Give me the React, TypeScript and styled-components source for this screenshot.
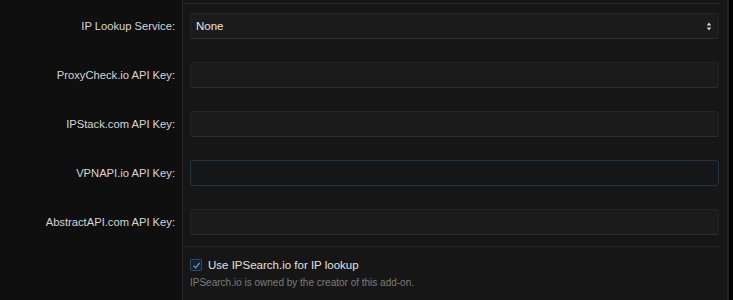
import React, { useState } from 'react'
import styled, { createGlobalStyle } from 'styled-components'

const GlobalStyle = createGlobalStyle`
  html, body {
    margin: 0;
    padding: 0;
    background: #000;
  }
  body {
    font-family: "Liberation Sans", Arial, Helvetica, sans-serif;
    -webkit-font-smoothing: antialiased;
  }
`

type Field = { label: string; value: string; focused?: boolean }

const fields: Field[] = [
  { label: 'ProxyCheck.io API Key:', value: '' },
  { label: 'IPStack.com API Key:', value: '' },
  { label: 'VPNAPI.io API Key:', value: '', focused: true },
  { label: 'AbstractAPI.com API Key:', value: '' },
]

export default function App() {
  const [useIpSearch, setUseIpSearch] = useState(true)

  return (
    <>
      <GlobalStyle />
      <Page>
        <Form>
          <Row>
            <Label>IP Lookup Service:</Label>
            <Value>
              <SelectBox>
                <span>None</span>
                <Arrows viewBox="0 0 6 10">
                  <path d="M3 0.5 L5.5 4 H0.5 Z" fill="#d8d8d8" />
                  <path d="M3 9.5 L5.5 6 H0.5 Z" fill="#d8d8d8" />
                </Arrows>
              </SelectBox>
            </Value>
          </Row>

          {fields.map((f) => (
            <Row key={f.label}>
              <Label>{f.label}</Label>
              <Value>
                <TextInput focused={f.focused} defaultValue={f.value} />
              </Value>
            </Row>
          ))}

          <Row last>
            <Label />
            <Value checks>
              <CheckLine onClick={() => setUseIpSearch(!useIpSearch)}>
                <CheckBox>
                  {useIpSearch && (
                    <svg width="9" height="9" viewBox="0 0 9 9">
                      <path d="M1.5 4.6 L3.6 6.7 L7.6 2" stroke="#4f9fcf" strokeWidth="1.3" fill="none" />
                    </svg>
                  )}
                </CheckBox>
                <CheckText>Use IPSearch.io for IP lookup</CheckText>
              </CheckLine>
              <Hint>IPSearch.io is owned by the creator of this add-on.</Hint>
            </Value>
          </Row>
        </Form>
        <Edge />
      </Page>
    </>
  )
}

const Page = styled.div`
  display: flex;
  width: 733px;
  height: 300px;
  overflow: hidden;
  background: #000;
`

const Form = styled.div`
  display: flex;
  flex-direction: column;
  width: 727px;
  background: linear-gradient(to right, #0f0f0f 0, #0f0f0f 182px, #262626 182px, #262626 183px, #161616 183px);
  padding-top: 3px;
  box-sizing: border-box;
  position: relative;

  &::before {
    content: '';
    position: absolute;
    top: 3px;
    left: 183px;
    right: 7px;
    height: 1px;
    background: #242424;
  }
`

const Edge = styled.div`
  width: 2px;
  background: #222;
`

const Row = styled.div<{ last?: boolean }>`
  display: flex;
  align-items: center;
  padding: ${(p) => (p.last ? '0' : '10px 0 13px')};
  margin-top: ${(p) => (p.last ? '-2px' : '0')};
`

const Label = styled.div`
  width: 183px;
  box-sizing: border-box;
  padding-right: 8px;
  text-align: right;
  font-size: 11.2px;
  color: #d6d6d6;
  flex-shrink: 0;
`

const Value = styled.div<{ checks?: boolean }>`
  flex: 1;
  padding: 0 8px 0 7px;
  display: flex;
  flex-direction: column;
  gap: ${(p) => (p.checks ? '6px' : '0')};
`

const SelectBox = styled.div`
  display: flex;
  align-items: center;
  justify-content: space-between;
  height: 26px;
  box-sizing: border-box;
  padding: 0 6px 0 5px;
  background: #1b1b1b;
  border: 1px solid #242424;
  border-bottom-color: #2e2e2e;
  border-radius: 3px;
  font-size: 11.5px;
  color: #e6e6e6;
`

const Arrows = styled.svg`
  width: 6px;
  height: 9px;
`

const TextInput = styled.input<{ focused?: boolean }>`
  height: 26px;
  box-sizing: border-box;
  width: 100%;
  background: ${(p) => (p.focused ? '#151719' : '#1b1b1b')};
  border: 1px solid ${(p) => (p.focused ? '#1f3445' : '#242424')};
  border-bottom-color: ${(p) => (p.focused ? '#1f3445' : '#2e2e2e')};
  border-radius: 3px;
  outline: none;
  color: #e6e6e6;
  font-family: inherit;
  font-size: 11.5px;
  padding: 0 6px;
`

const CheckLine = styled.label`
  display: flex;
  align-items: center;
  gap: 6px;
  cursor: pointer;
  padding-top: 12px;
  border-top: 1px solid #242424;
  margin: 0 0 0 -7px;
  padding-left: 7px;
`

const CheckBox = styled.span`
  display: inline-flex;
  align-items: center;
  justify-content: center;
  width: 10px;
  height: 10px;
  border: 1px solid #2d4a5e;
  background: #14212b;
  border-radius: 2px;
`

const CheckText = styled.span`
  font-size: 11.5px;
  color: #e2e2e2;
`

const Hint = styled.div`
  font-size: 10px;
  color: #7c7c7c;
`
